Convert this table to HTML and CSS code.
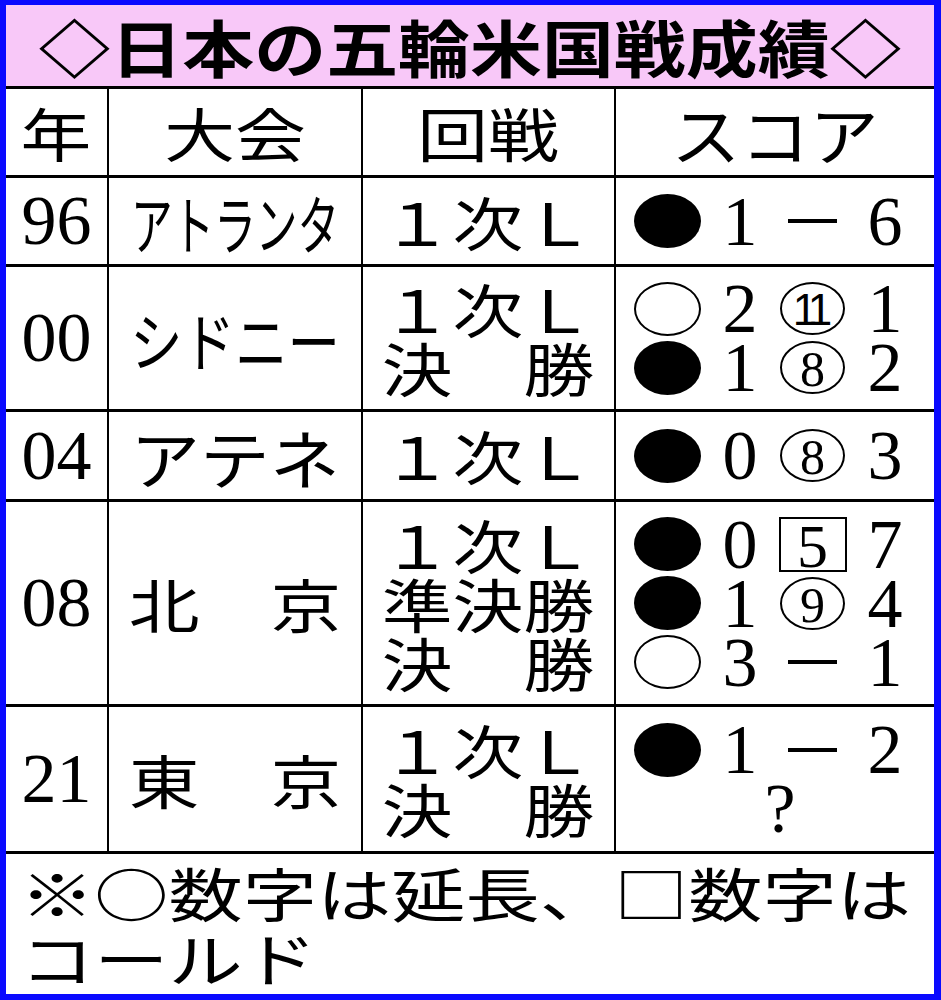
FILE: index.html
```html
<!DOCTYPE html>
<html lang="ja">
<head>
<meta charset="utf-8">
<title>日本の五輪米国戦成績</title>
<link rel="stylesheet" href="styles.css">
</head>
<body>
<div class="frame">
  <div class="title"><span class="title-text">◇日本の五輪米国戦成績◇</span></div>
  <div class="table">
    <div class="cell"><span class="jp wide">年</span></div>
    <div class="cell"><span class="jp wide">大会</span></div>
    <div class="cell"><span class="jp wide">回戦</span></div>
    <div class="cell"><span class="jp kana k3h">スコア</span></div>

    <div class="cell year">96</div>
    <div class="cell"><span class="jp kana k5">アトランタ</span></div>
    <div class="cell"><span class="jp wide lines">１次Ｌ</span></div>
    <div class="cell score">
      <div class="sl"><span class="bk"></span><span class="d">1</span><span class="dash"></span><span class="d">6</span></div>
    </div>

    <div class="cell year">00</div>
    <div class="cell"><span class="jp kana k4">シドニー</span></div>
    <div class="cell"><span class="jp wide lines">１次Ｌ<br>決　勝</span></div>
    <div class="cell score">
      <div class="sl"><span class="wh"></span><span class="d">2</span><span class="ci ci11">11</span><span class="d">1</span></div>
      <div class="sl"><span class="bk"></span><span class="d">1</span><span class="ci">8</span><span class="d">2</span></div>
    </div>

    <div class="cell year">04</div>
    <div class="cell"><span class="jp kana k3">アテネ</span></div>
    <div class="cell"><span class="jp wide lines">１次Ｌ</span></div>
    <div class="cell score">
      <div class="sl"><span class="bk"></span><span class="d">0</span><span class="ci">8</span><span class="d">3</span></div>
    </div>

    <div class="cell year">08</div>
    <div class="cell"><span class="jp wide">北　京</span></div>
    <div class="cell"><span class="jp wide lines">１次Ｌ<br>準決勝<br>決　勝</span></div>
    <div class="cell score">
      <div class="sl"><span class="bk"></span><span class="d">0</span><span class="sq">5</span><span class="d">7</span></div>
      <div class="sl"><span class="bk"></span><span class="d">1</span><span class="ci">9</span><span class="d">4</span></div>
      <div class="sl"><span class="wh"></span><span class="d">3</span><span class="dash"></span><span class="d">1</span></div>
    </div>

    <div class="cell year">21</div>
    <div class="cell"><span class="jp wide">東　京</span></div>
    <div class="cell"><span class="jp wide lines">１次Ｌ<br>決　勝</span></div>
    <div class="cell score">
      <div class="sl"><span class="bk"></span><span class="d">1</span><span class="dash"></span><span class="d">2</span></div>
      <div class="sl"><span class="q">?</span></div>
    </div>

    <div class="cell note"><span class="note-text">※○数字は延長、□数字は<br>コールド</span></div>
  </div>
</div>
</body>
</html>
```
FILE: styles.css
```css
html, body {
  margin: 0;
  padding: 0;
  background: #0a0aff;
}

.frame {
  width: 941px;
  height: 1000px;
  box-sizing: border-box;
  padding: 5px 7px 6px 6px;
  background: #0a0aff;
  display: flex;
  flex-direction: column;
}

.title {
  height: 81px;
  background: #f8c8f8;
  display: flex;
  align-items: center;
  justify-content: center;
  overflow: hidden;
}

.title-text {
  display: inline-block;
  font-family: "Noto Sans CJK JP", sans-serif;
  font-size: 62px;
  line-height: 1;
  font-weight: 700;
  color: #000;
  transform: scaleX(1.16);
  transform-origin: center;
  white-space: nowrap;
}

.table {
  display: grid;
  grid-template-columns: 101px 252px 251px 318px;
  grid-template-rows: 86px 86px 142px 87px 202px 144px 140px;
  column-gap: 2px;
  row-gap: 3px;
  padding-top: 3px;
  background: #000;
}

.cell {
  background: #fff;
  display: flex;
  align-items: center;
  justify-content: center;
  color: #000;
  overflow: hidden;
}

.jp {
  display: inline-block;
  font-family: "Noto Sans CJK JP", sans-serif;
  font-size: 58px;
  font-weight: 400;
  line-height: 59px;
  white-space: nowrap;
  transform-origin: center;
}

.wide { transform: scaleX(1.22); }

.kana {
  font-size: 64px;
  line-height: 64px;
}

.k5 { transform: scaleX(0.65); }
.k4 { transform: scaleX(0.82); }
.k3 { transform: scaleX(1.09); }
.k3h { transform: scaleX(1.08); }

.lines { text-align: center; }

.year {
  font-family: "Liberation Serif", serif;
  font-size: 70px;
  line-height: 1;
}

.score {
  flex-direction: column;
}

.sl {
  display: grid;
  grid-template-columns: 75px 70px 75px 70px;
  height: 59px;
  align-items: center;
  justify-items: center;
}

.bk, .wh {
  width: 67px;
  height: 54px;
  border-radius: 50%;
  box-sizing: border-box;
}

.bk { background: #000; }

.wh {
  background: #fff;
  border: 2px solid #000;
}

.d {
  font-family: "Liberation Serif", serif;
  font-size: 70px;
  line-height: 59px;
}

.dash {
  width: 49px;
  height: 4px;
  background: #000;
}

.ci {
  width: 65px;
  height: 53px;
  box-sizing: border-box;
  border: 2.5px solid #000;
  border-radius: 50%;
  display: flex;
  align-items: center;
  justify-content: center;
  font-family: "Liberation Serif", serif;
  font-size: 50px;
  line-height: 1;
  padding-top: 3px;
}

.ci11 {
  font-family: "Liberation Sans", sans-serif;
  font-size: 44px;
  letter-spacing: -6px;
  padding-right: 6px;
}

.sq {
  width: 68px;
  height: 55px;
  box-sizing: border-box;
  border: 2.5px solid #000;
  display: flex;
  align-items: center;
  justify-content: center;
  font-family: "Liberation Serif", serif;
  font-size: 62px;
  line-height: 1;
  padding-top: 4px;
}

.q {
  grid-column: 1 / -1;
  padding-left: 10px;
  font-family: "Liberation Serif", serif;
  font-size: 70px;
  line-height: 59px;
}

.note {
  grid-column: 1 / -1;
  justify-content: flex-start;
  align-items: flex-start;
  padding: 6px 0 0 14px;
}

.note-text {
  display: inline-block;
  font-family: "Noto Sans CJK JP", sans-serif;
  font-size: 58px;
  font-weight: 400;
  line-height: 65px;
  white-space: nowrap;
  transform: scaleX(1.28);
  transform-origin: left top;
}
```
